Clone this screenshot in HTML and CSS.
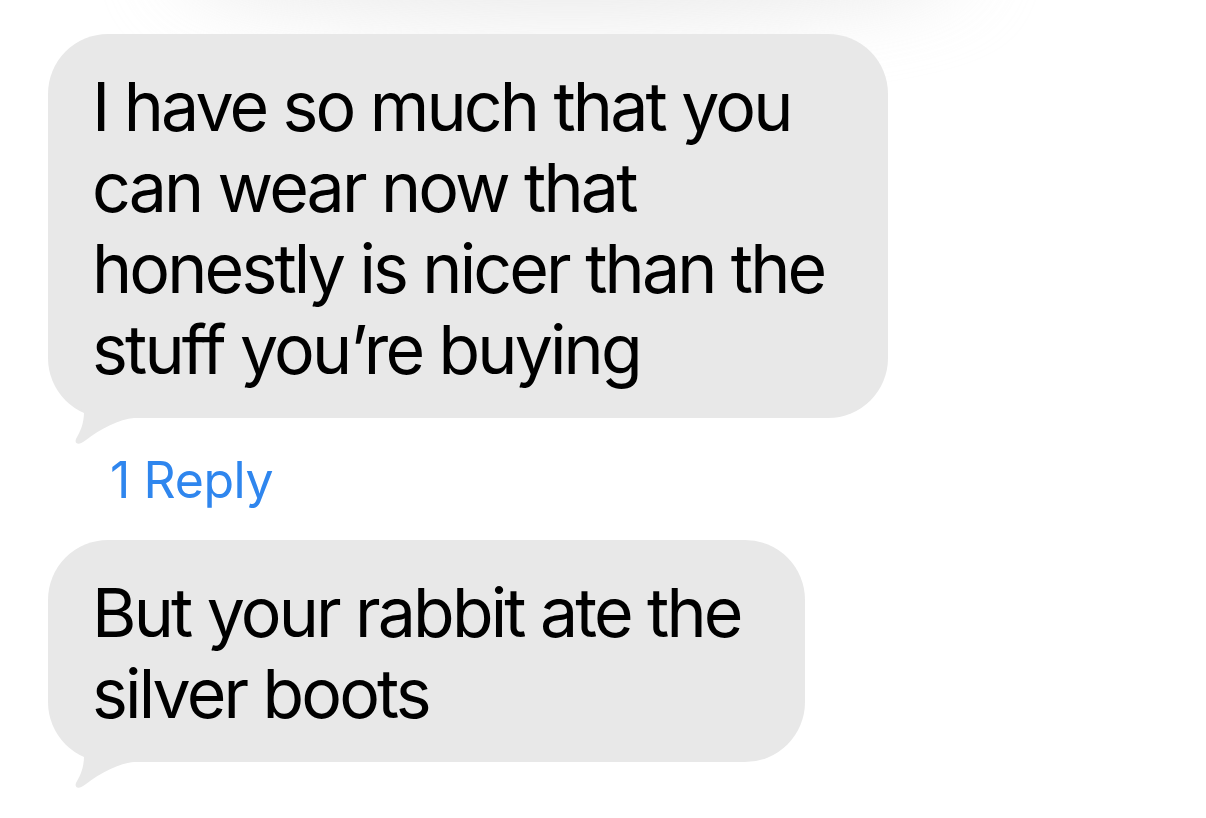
FILE: index.html
```html
<!DOCTYPE html>
<html lang="en">
<head>
<meta charset="utf-8">
<title>Messages</title>
<link rel="stylesheet" href="styles.css">
</head>
<body>
<div class="top-shade"></div>
<main class="thread">
  <div class="bubble bubble--first">
    <p class="bubble-text">I have so much that you<br>can wear now that<br>honestly is nicer than the<br>stuff you’re buying</p>
    <svg class="tail" viewBox="0 0 100 110" width="100" height="110" aria-hidden="true"><path d="M0 0 L100 0 L100 80 L86 80 C72 81 52 91 38 102 C32 107 26 107 28 101 C32 94 36 86 36 74 C15 58 0 35 0 12 Z"/></svg>
  </div>
  <div class="reply-link">1 Reply</div>
  <div class="bubble bubble--second">
    <p class="bubble-text">But your rabbit ate the<br>silver boots</p>
    <svg class="tail" viewBox="0 0 100 110" width="100" height="110" aria-hidden="true"><path d="M0 0 L100 0 L100 80 L86 80 C72 81 52 91 38 102 C32 107 26 107 28 101 C32 94 36 86 36 74 C15 58 0 35 0 12 Z"/></svg>
  </div>
</main>
</body>
</html>
```

FILE: styles.css
```css
html, body {
  margin: 0;
  padding: 0;
  background: #ffffff;
}
body {
  width: 1206px;
  height: 818px;
  overflow: hidden;
  position: relative;
  font-family: Inter, "Noto Sans", "Liberation Sans", sans-serif;
}
.top-shade {
  position: absolute;
  left: 170px;
  top: -95px;
  width: 800px;
  height: 110px;
  border-radius: 50%;
  background: #e2e2e2;
  filter: blur(40px);
  opacity: 0.75;
}
.thread {
  position: relative;
  display: flex;
  flex-direction: column;
  align-items: flex-start;
  padding: 34px 0 0 48px;
}
.bubble {
  position: relative;
  background: #e8e8e8;
  border-radius: 60px;
  padding: 32px 40px 28px 44px;
  box-sizing: border-box;
}
.bubble--first {
  width: 840px;
}
.bubble--second {
  width: 757px;
  margin-top: 30px;
}
.bubble-text {
  position: relative;
  z-index: 1;
  margin: 0;
  font-size: 68px;
  line-height: 81px;
  letter-spacing: -2.85px;
  color: #000;
  white-space: nowrap;
}
.tail {
  position: absolute;
  left: 0;
  bottom: -30px;
  fill: #e8e8e8;
}
.reply-link {
  margin: 32px 0 0 62px;
  font-size: 50px;
  line-height: 60px;
  letter-spacing: -0.4px;
  color: #2f86ee;
}
```
